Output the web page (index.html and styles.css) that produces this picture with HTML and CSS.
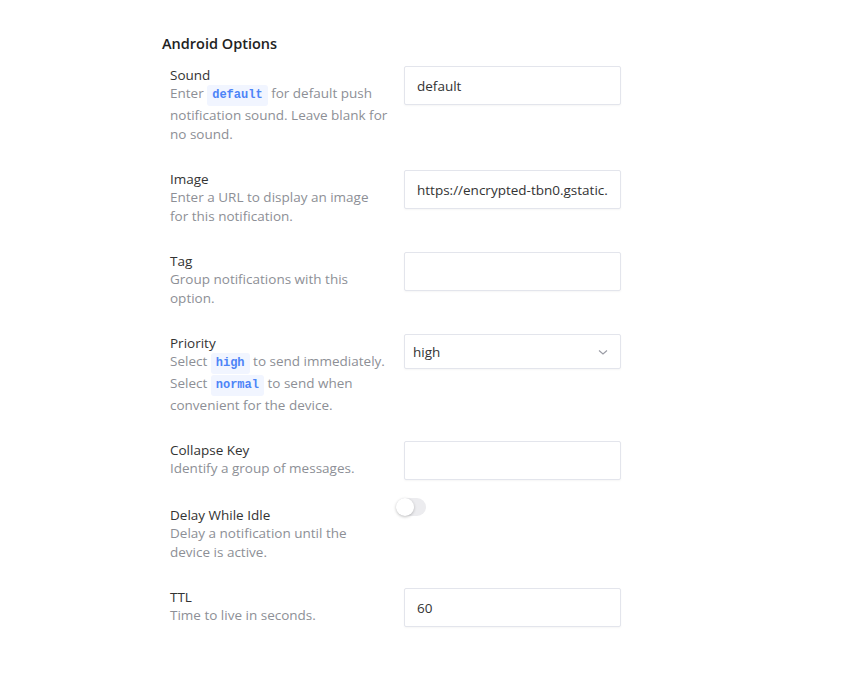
FILE: index.html
```html
<!DOCTYPE html>
<html lang="en">

<head>
    <meta charset="UTF-8">
    <meta name="viewport" content="width=device-width, initial-scale=1.0">
    <title>Android Options</title>
    <link rel="stylesheet" href="styles.css">
</head>

<body>
    <main class="options">
        <h2 class="options-title">Android Options</h2>

        <div class="field">
            <div class="field-info">
                <h3 class="label">Sound</h3>
                <p class="hint">Enter <code>default</code> for default push notification sound. Leave blank for no sound.</p>
            </div>
            <input class="input" type="text" value="default">
        </div>

        <div class="field">
            <div class="field-info">
                <h3 class="label">Image</h3>
                <p class="hint">Enter a URL to display an image for this notification.</p>
            </div>
            <input class="input" type="text" value="https://encrypted-tbn0.gstatic.com/images?q=tbn">
        </div>

        <div class="field">
            <div class="field-info">
                <h3 class="label">Tag</h3>
                <p class="hint">Group notifications with this option.</p>
            </div>
            <input class="input" type="text" value="">
        </div>

        <div class="field">
            <div class="field-info">
                <h3 class="label">Priority</h3>
                <p class="hint">Select <code>high</code> to send immediately. Select <code>normal</code> to send when convenient for the device.</p>
            </div>
            <div class="select">
                <span>high</span>
                <svg width="12" height="12" viewBox="0 0 12 12" fill="none" stroke="#9a9ca5" stroke-width="1.1">
                    <path d="M2 4.5l4 3.5 4-3.5" />
                </svg>
            </div>
        </div>

        <div class="field field-tight">
            <div class="field-info">
                <h3 class="label">Collapse Key</h3>
                <p class="hint">Identify a group of messages.</p>
            </div>
            <input class="input" type="text" value="">
        </div>

        <div class="field">
            <div class="field-info field-info-toggle">
                <h3 class="label">Delay While Idle</h3>
                <p class="hint">Delay a notification until the device is active.</p>
            </div>
            <div class="toggle">
                <span class="knob"></span>
            </div>
        </div>

        <div class="field">
            <div class="field-info">
                <h3 class="label">TTL</h3>
                <p class="hint">Time to live in seconds.</p>
            </div>
            <input class="input" type="text" value="60">
        </div>
    </main>
</body>

</html>
```

FILE: styles.css
```css
* {
    margin: 0;
    padding: 0;
    box-sizing: border-box;
}

body {
    background-color: #fff;
    font-family: "Open Sans", sans-serif;
    color: #333;
}

.options {
    padding: 35px 0 0 162px;
}

.options-title {
    font-size: 14.5px;
    font-weight: 600;
    line-height: 18px;
    color: #222;
    margin-bottom: 13px;
}

.field {
    display: grid;
    grid-template-columns: 219px 217px;
    column-gap: 15px;
    align-items: start;
    margin-left: 8px;
    margin-bottom: 26px;
}

.field-tight {
    margin-bottom: 18px;
}

.field-info-toggle {
    padding-top: 8px;
}

.label {
    font-size: 13.5px;
    font-weight: 400;
    line-height: 18px;
    color: #333;
}

.hint {
    font-size: 13.5px;
    line-height: 19px;
    color: #8d8f96;
}

.hint code {
    display: inline-block;
    font: 700 12px "Liberation Mono", monospace;
    line-height: 17px;
    padding: 2px 5px;
    border-radius: 3px;
    color: #4d84f7;
    background-color: #f1f5ff;
}

.input,
.select {
    width: 217px;
    height: 39px;
    padding: 0 12px;
    border: 1px solid #e3e5ec;
    border-radius: 2px;
    box-shadow: 0 1px 2px #0000000a;
    font: 400 13.5px "Open Sans", sans-serif;
    color: #333;
    background-color: #fff;
    outline: none;
}

.select {
    height: 35px;
    padding: 0 11px 0 8px;
    display: flex;
    align-items: center;
    justify-content: space-between;
}

.toggle {
    width: 30px;
    height: 18px;
    margin-left: -8px;
    border-radius: 9px;
    background-color: #ececef;
    position: relative;
}

.toggle .knob {
    position: absolute;
    left: 0;
    top: 0;
    width: 18px;
    height: 18px;
    border-radius: 50%;
    background-color: #fff;
    box-shadow: 0 1px 3px #00000040;
}
```
